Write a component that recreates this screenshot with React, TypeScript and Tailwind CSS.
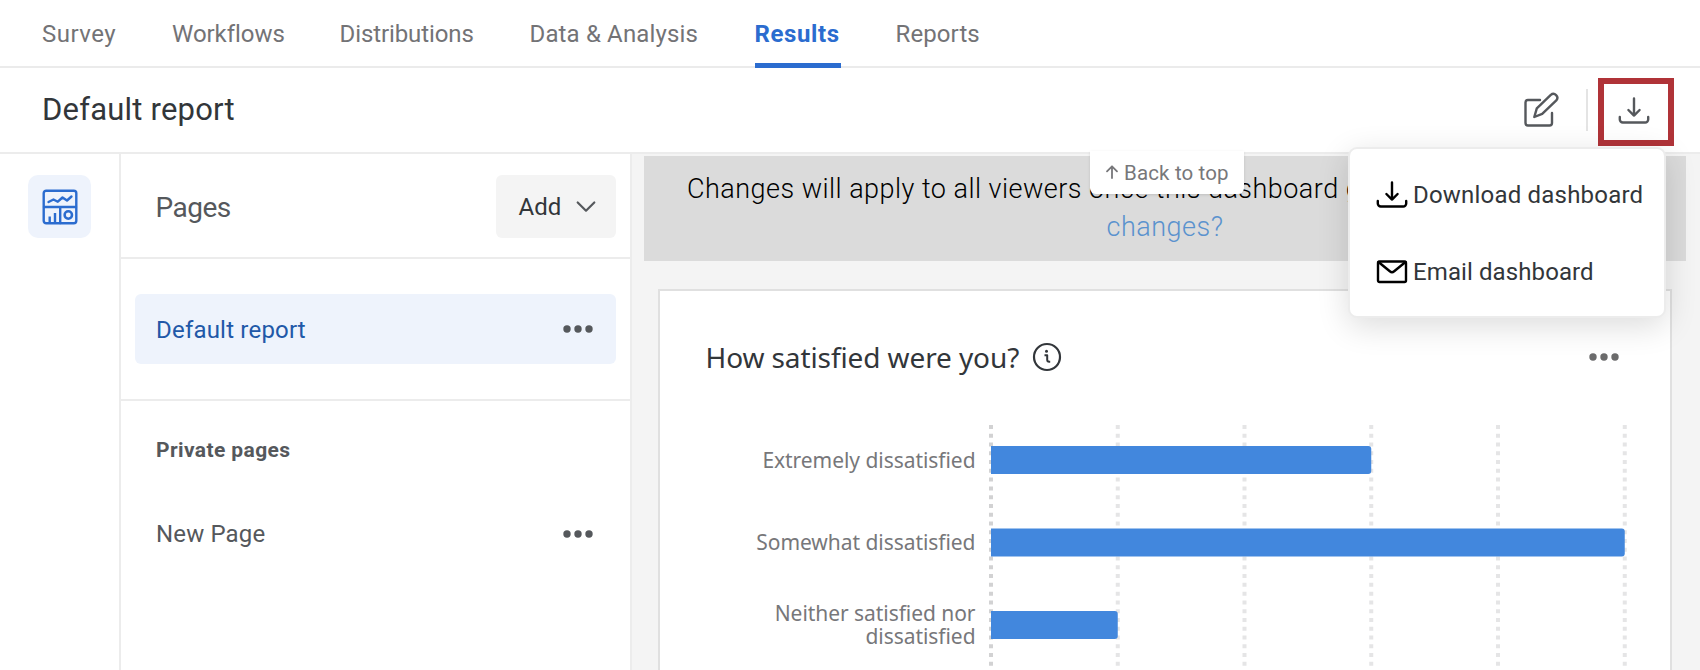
import type { ReactNode } from "react";

const TABS = [
  { label: "Survey", box: "w-[75px]", text: "tracking-[0.5px]" },
  { label: "Workflows", box: "w-[112.5px]", text: "tracking-[-0.05px]" },
  { label: "Distributions", box: "w-[135px]", text: "tracking-[-0.1px]" },
  { label: "Data & Analysis", box: "w-[170px]", text: "tracking-[0.15px]" },
  { label: "Results", box: "w-[86px]", text: "tracking-[0.6px]", active: true },
  { label: "Reports", box: "w-[86px]", text: "tracking-[0.1px]" },
];

const ROWS = [
  { label: "Extremely dissatisfied", value: 3 },
  { label: "Somewhat dissatisfied", value: 5 },
  { label: "Neither satisfied nor dissatisfied", value: 1 },
];

function Stroke({ className, viewBox, width = 2, children }: { className: string; viewBox: string; width?: number; children: ReactNode }) {
  return (
    <svg className={className} viewBox={viewBox} fill="none" stroke="currentColor" strokeWidth={width} strokeLinecap="round" strokeLinejoin="round">
      {children}
    </svg>
  );
}

function DownloadIcon({ className }: { className: string }) {
  return (
    <Stroke className={className} viewBox="0 0 32 28" width={2.4}>
      <path d="M16 1.500v17M10.400 13l5.600 5.600 5.600-5.600" />
      <path d="M1.800 20v2.500a3 3 0 0 0 3 3h22.400a3 3 0 0 0 3-3V20" />
    </Stroke>
  );
}

function EditIcon() {
  return (
    <Stroke className="h-9 w-9 text-[#55585c]" viewBox="0 0 36 36" width={2.400}>
      <path d="M17 8H5a2.500 2.500 0 0 0-2.500 2.500V31a2.500 2.500 0 0 0 2.500 2.500h21.500a2.500 2.500 0 0 0 2.500-2.500V21" />
      <path d="M11.300 25l2.500-8.700L27.800 2.900a3.900 3.900 0 0 1 5.500 5.500L19.200 21.900Z" />
    </Stroke>
  );
}

function DashboardIcon() {
  return (
    <Stroke className="h-9 w-9 text-[#2b6ccf]" viewBox="0 0 36 36" width={2.4}>
      <rect x="1.700" y="1.700" width="32.600" height="32.600" rx="2.500" />
      <path d="M2 18h32M18.200 18v16" />
      <path d="M6.500 13l5-2.500 4.300 2.200L20.500 8.500l4.500 3L29.500 7.500" />
      <path d="M7.700 27.500V33M13 24V33" strokeLinecap="butt" />
      <circle cx="26.300" cy="26" r="3.700" strokeWidth="2.500" />
    </Stroke>
  );
}

function Dots({ className }: { className: string }) {
  return (
    <svg className={className} viewBox="0 0 32 10" fill="currentColor">
      <circle cx="5" cy="5" r="3.700" />
      <circle cx="16" cy="5" r="3.700" />
      <circle cx="27" cy="5" r="3.700" />
    </svg>
  );
}

function TopNav() {
  return (
    <nav className="flex h-[68px] shrink-0 gap-[55px] border-b-2 border-[#ebebeb] pl-[42px] text-[24px] text-[#737376]">
      {TABS.map((t) => (
        <div key={t.label} className={`flex h-[68px] shrink-0 flex-col ${t.box} ${t.active ? "font-bold text-[#2b6ccf]" : ""}`}>
          <span className={`flex h-[63px] items-center pt-1 whitespace-nowrap ${t.text}`}>{t.label}</span>
          {t.active && <span className="h-[5px] bg-[#2b6ccf]" />}
        </div>
      ))}
    </nav>
  );
}

function PagesPanel() {
  return (
    <aside className="flex w-[511px] shrink-0 flex-col border-r-2 border-[#ececec] text-[24px] text-[#55585c]">
      <div className="flex h-[105px] shrink-0 items-center justify-between border-b-2 border-[#ececec] pr-[14px] pl-[34.500px]">
        <h2 className="pt-[5px] text-[28px] tracking-[-0.500px]">Pages</h2>
        <button className="mt-[1px] flex h-[63px] w-[120.500px] items-center justify-between rounded-md bg-[#f4f4f4] pt-px pr-5 pl-[23px] text-[#32363a]">
          Add
          <Stroke className="h-[13px] w-5 text-[#55585c]" viewBox="0 0 20 13" width={2.200}>
            <path d="M1.700 2.500L10 10.700L18.300 2.500" />
          </Stroke>
        </button>
      </div>
      <div className="flex h-[142px] shrink-0 items-center border-b-2 border-[#ececec] pr-[14px] pl-3.5">
        <div className="flex h-[70px] w-full items-center justify-between rounded-md bg-[#eef3fc] pr-[22px] pl-[21px]">
          <span className="pt-px tracking-[0.200px] text-[#2158a8]">Default report</span>
          <Dots className="h-2.5 w-8" />
        </div>
      </div>
      <h3 className="mt-[38px] flex h-6 items-center pl-[35px] text-[21px] font-bold tracking-[0.400px]">Private pages</h3>
      <div className="mt-[53px] flex h-[36px] items-center justify-between pr-[36px] pl-[35px]">
        <span className="tracking-[0.150px]">New Page</span>
        <Dots className="h-2.5 w-8" />
      </div>
    </aside>
  );
}

function Chart() {
  const x = (v: number) => 7 + v * 126.750;
  return (
    <div className="mt-[37px] flex font-['Noto_Sans']">
      <div className="flex w-[315.500px] flex-col pt-[5px]">
        {ROWS.map((r) => (
          <div key={r.label} className="flex h-[82.500px] items-center justify-end text-right text-[21px] leading-[23px] tracking-[-0.050px] text-[#77777a]">
            <span className="max-w-[240px]">{r.label}</span>
          </div>
        ))}
      </div>
      <svg className="ml-[8.500px] h-[256px] w-[660px]" viewBox="0 0 660 256">
        {[0, 1, 2, 3, 4, 5].map((v) => (
          <line key={v} x1={x(v)} x2={x(v)} y1="11" y2="256" stroke={v ? "#e5e5e6" : "#d2d2d3"} strokeWidth="4" strokeDasharray="4 4.770" />
        ))}
        {ROWS.map((r, i) => {
          const y = 32 + i * 82.500;
          return <path key={r.label} d={`M7 ${y}H${x(r.value) - 3}q3 0 3 3v22q0 3 -3 3H7Z`} fill="#4287dd" />;
        })}
      </svg>
    </div>
  );
}

function ExportMenu() {
  return (
    <div className="absolute top-[147px] left-[1348px] z-20 flex h-[171px] w-[318px] flex-col rounded-[9px] border-2 border-[#ececec] bg-white pt-[7px] pl-[26px] text-[24px] text-[#32363a] shadow-[0_8px_32px_rgba(0,0,0,0.140)]">
      <div className="flex h-[77px] items-center gap-[5px]">
        <DownloadIcon className="h-7 w-8 text-black" />
        <span className="pt-px tracking-[0.200px]">Download dashboard</span>
      </div>
      <div className="flex h-[77px] items-center gap-[5px]">
        <Stroke className="h-7 w-8 text-black" viewBox="0 0 32 28" width={2.400}>
          <rect x="2" y="3.500" width="28" height="20.500" rx="1.500" />
          <path d="M2.500 4l11.300 9.300a3.500 3.500 0 0 0 4.400 0L29.500 4" />
        </Stroke>
        <span className="pt-px tracking-[0.100px]">Email dashboard</span>
      </div>
    </div>
  );
}

export default function App() {
  return (
    <div className="relative flex h-[670px] w-[1700px] flex-col overflow-hidden bg-white font-[Roboto,sans-serif]">
      <TopNav />
      <header className="flex h-[86px] shrink-0 items-center border-b-2 border-[#ececec] pl-[42px]">
        <h1 className="pt-px text-[31px] tracking-[0.200px] text-[#32363a]">Default report</h1>
        <div className="ml-auto flex items-center pr-[26px]">
          <EditIcon />
          <span className="ml-[27.500px] h-[42px] w-0.5 bg-[#e4e4e4]" />
          <div className="mt-[4px] ml-2.5 flex h-[68px] w-[76px] items-center justify-center border-6 border-[#b03338] pr-[5px] pb-0.5">
            <DownloadIcon className="h-7 w-8 text-[#55585c]" />
          </div>
        </div>
      </header>
      <div className="flex min-h-0 flex-1">
        <div className="w-[121px] shrink-0 border-r-2 border-[#ececec] pt-[21px] pl-7">
          <div className="flex h-[63px] w-[63px] items-center justify-center rounded-[10px] bg-[#eef3fc]">
            <DashboardIcon />
          </div>
        </div>
        <PagesPanel />
        <main className="min-w-0 flex-1 bg-[#f4f4f4] pt-[1.500px] pl-3">
          <div className="h-[105px] w-[1042px] bg-[#dbdbdb] pt-[14px] text-[27px] leading-[38.500px] font-light text-black">
            <p className="pl-[43px] tracking-[0.470px] whitespace-nowrap">Changes will apply to all viewers once this dashboard gets</p>
            <p className="text-center tracking-[0.500px] text-[#5a92ce]">changes?</p>
          </div>
          <section className="mt-[28.500px] ml-[14px] h-[420px] w-[1014px] border-2 border-[#e0e0e0] bg-white pt-[46px]">
            <div className="flex h-[40px] items-center pr-[50.500px] pl-[45.500px]">
              <h2 className="font-['Noto_Sans'] text-[28px] tracking-[-0.100px] text-[#32363a]">How satisfied were you?</h2>
              <Stroke className="ml-[12.500px] h-[30px] w-[30px] text-[#32363a]" viewBox="0 0 30 30" width={2.200}>
                <circle cx="15" cy="15" r="13" />
                <path d="M12.500 13.200h2.700v4.600q0 2 2 2h1" strokeWidth="2" strokeLinecap="butt" />
                <circle cx="14.500" cy="9.300" r="1.500" fill="currentColor" stroke="none" />
              </Stroke>
              <Dots className="ml-auto h-2.5 w-8 text-[#6b6b6c]" />
            </div>
            <Chart />
          </section>
        </main>
      </div>
      <div className="absolute top-[151px] left-[1090px] z-10 flex h-[43px] w-[154px] items-center rounded-b-md bg-white pt-0.5 pl-[15px] text-[20.500px] tracking-[0.150px] text-[#77777a] shadow-[0_1px_3px_rgba(0,0,0,0.120)]">
        <Stroke className="mr-[5px] mb-[3px] h-[14px] w-[14px]" viewBox="0 0 14 14" width={1.800}>
          <path d="M7 13V1.500M2 6.300L7 1.300L12 6.300" />
        </Stroke>
        Back to top
      </div>
      <ExportMenu />
    </div>
  );
}
